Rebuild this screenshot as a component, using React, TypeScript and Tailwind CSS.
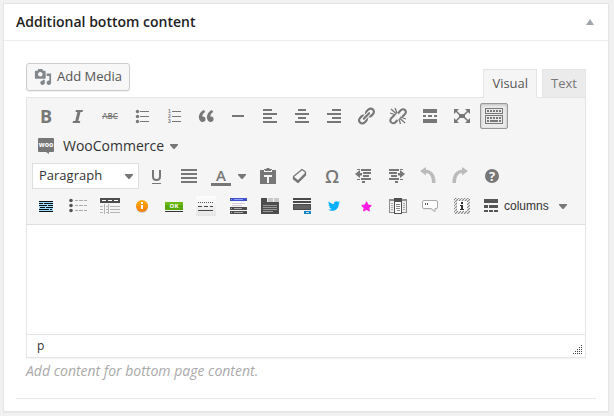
import type { ReactNode } from "react";
import { FaStar, FaTwitter } from "react-icons/fa";

const GRAY = "#777777";

function Icon({ children, crisp = false, size = 20 }: { children: ReactNode; crisp?: boolean; size?: number }) {
  return (
    <svg
      width={size}
      height={size}
      viewBox="0 0 20 20"
      fill={GRAY}
      shapeRendering={crisp ? "crispEdges" : "auto"}
      aria-hidden="true"
      className="block shrink-0"
    >
      {children}
    </svg>
  );
}

function Arrow() {
  return (
    <svg width="8" height="5" viewBox="0 0 8 5" fill="#777777" aria-hidden="true" className="block shrink-0">
      <path d="M0 0h8v1L4.500 5h-1L0 1z" />
    </svg>
  );
}

type Tool = { label: string; icon: ReactNode; active?: boolean };

function ToolButton({ label, icon, active }: Tool) {
  return (
    <button
      type="button"
      aria-label={label}
      aria-pressed={active}
      className={
        active
          ? "mx-0.5 flex h-[26px] w-7 items-center justify-center rounded-xs border border-[#999] bg-[#ebebeb] shadow-[inset_0_1px_3px_rgba(0,0,0,0.2)]"
          : "mx-0.5 flex h-[26px] w-7 items-center justify-center"
      }
    >
      {icon}
    </button>
  );
}

function Row({ label, children }: { label: string; children: ReactNode }) {
  return (
    <div role="group" aria-label={label} className="flex h-[30px] items-center">
      {children}
    </div>
  );
}

const LINK =
  "M17.74 2.76c1.68 1.69 1.68 4.41 0 6.1l-1.53 1.52c-1.12 1.12-2.7 1.47-4.14 1.09l2.62-2.61.76-.77.76-.76c.84-.84.84-2.2 0-3.04-.84-.85-2.2-.85-3.04 0l-.77.76-3.38 3.38c-.37-1.44-.02-3.02 1.1-4.14l1.52-1.53c1.69-1.68 4.42-1.68 6.1 0zM8.59 13.43l5.34-5.34c.42-.42.42-1.1 0-1.52-.44-.43-1.13-.39-1.53 0l-5.33 5.34c-.42.42-.42 1.1 0 1.52.44.43 1.13.39 1.52 0zm-.76 2.29l4.14-4.15c.38 1.44.03 3.02-1.09 4.14l-1.52 1.53c-1.69 1.68-4.41 1.68-6.1 0-1.68-1.68-1.68-4.42 0-6.1l1.53-1.52c1.12-1.12 2.7-1.47 4.14-1.1l-4.14 4.15c-.85.84-.85 2.2 0 3.05.84.84 2.2.84 3.04 0z";

const formatTools: Tool[] = [
  { label: "Bold", icon: <span className="text-lg leading-5 font-bold text-[#777]">B</span> },
  {
    label: "Italic",
    icon: (
      <Icon>
        <path d="M8 4h7l-.5 2h-2l-2.200 9h2l-.5 2H4.500l.5-2h2.200L9.400 6H7.500z" />
      </Icon>
    ),
  },
  {
    label: "Strikethrough",
    icon: (
      <Icon>
        <text x="10" y="13" textAnchor="middle" fontSize="8" fontWeight="600">ABC</text>
        <path d="M2 10h16v1H2z" shapeRendering="crispEdges" />
      </Icon>
    ),
  },
  {
    label: "Bulleted list",
    icon: (
      <Icon>
        <circle cx="5.500" cy="5.500" r="1.700" />
        <circle cx="5.500" cy="10.500" r="1.700" />
        <circle cx="5.500" cy="15.500" r="1.700" />
        <path d="M8 5h9v1H8zM8 10h9v1H8zM8 15h9v1H8z" shapeRendering="crispEdges" />
      </Icon>
    ),
  },
  {
    label: "Numbered list",
    icon: (
      <Icon>
        <path d="M8 5h9v1H8zM8 10h9v1H8zM8 15h9v1H8z" shapeRendering="crispEdges" />
        <g fontSize="5" fontWeight="700" fontFamily="Liberation Sans, sans-serif">
          <text x="4" y="7">1</text>
          <text x="4" y="12">2</text>
          <text x="4" y="17">3</text>
        </g>
      </Icon>
    ),
  },
  {
    label: "Blockquote",
    icon: (
      <Icon>
        <path d="M9.490 13.220c0-.74-.2-1.380-.61-1.900-.62-.78-1.830-.88-2.530-.72-.29-1.650 1.110-3.750 2.920-4.650L7.880 4c-2.730 1.300-5.420 4.280-4.960 8.050C3.210 14.430 4.590 16 6.540 16c.85 0 1.560-.25 2.120-.75s.83-1.180.83-2.030zm8.050 0c0-.74-.2-1.380-.61-1.900-.63-.78-1.830-.88-2.530-.72-.29-1.650 1.110-3.750 2.920-4.650L15.930 4c-2.730 1.300-5.410 4.280-4.950 8.050.29 2.380 1.660 3.950 3.610 3.950.85 0 1.560-.25 2.120-.75s.83-1.180.83-2.030z" />
      </Icon>
    ),
  },
  { label: "Horizontal line", icon: <Icon crisp><path d="M4 9h12v2H4z" /></Icon> },
  { label: "Align left", icon: <Icon crisp><path d="M3 3h9v2H3zM3 7h14v2H3zM3 11h9v2H3zM3 15h14v2H3z" /></Icon> },
  { label: "Align center", icon: <Icon crisp><path d="M6 3h8v2H6zM3 7h14v2H3zM6 11h8v2H6zM3 15h14v2H3z" /></Icon> },
  { label: "Align right", icon: <Icon crisp><path d="M8 3h9v2H8zM3 7h14v2H3zM8 11h9v2H8zM3 15h14v2H3z" /></Icon> },
  { label: "Insert link", icon: <Icon><path d={LINK} /></Icon> },
  {
    label: "Remove link",
    icon: (
      <Icon>
        <g fill="none" stroke={GRAY} strokeWidth="2">
          <path d="M10 7.500l2.500-3c1.500-1.800 3.500-1.600 4.500-.5s1.200 2.800-.2 4.200L14 11M6.500 9l-3 3c-1.500 1.500-1.300 3.300-.3 4.400s3 1.200 4.300-.2l2-2.200" />
        </g>
        <path d="M3 3l5.500 5M7 2l2 5M2 7l6 2M17 17l-5.500-5M12.500 18l-1.500-5M18 13l-6-2" fill="none" stroke={GRAY} strokeWidth="1.300" />
      </Icon>
    ),
  },
  {
    label: "Read more tag",
    icon: <Icon crisp><path d="M3 3h14v4H3zM3 9h3v2H3zM8 9h4v2H8zM14 9h3v2h-3zM3 13h14v4H3z" /></Icon>,
  },
  {
    label: "Distraction-free mode",
    icon: (
      <Icon>
        <path d="M7 8h6v4H7z" />
        <path d="M2 3h5L2 8zM18 3v5l-5-5zM2 17v-5l5 5zM18 17h-5l5-5z" />
        <path d="M3 4l5 5M17 4l-5 5M3 16l5-5M17 16l-5-5" stroke={GRAY} strokeWidth="1.500" />
      </Icon>
    ),
  },
  {
    label: "Toolbar toggle",
    active: true,
    icon: (
      <Icon crisp>
        <path fillRule="evenodd" d="M1 2h18v6H1zM2 3v4h16V3zM1 9h18v9H1zM2 10v7h16v-7z" />
        <path d="M3 4h2v2H3zM6 4h2v2H6zM9 4h2v2H9zM12 4h2v2h-2zM15 4h2v2h-2zM3 11h2v2H3zM6 11h2v2H6zM9 11h2v2H9zM12 11h2v2h-2zM15 11h2v2h-2zM3 14h2v2H3zM6 14h8v2H6zM15 14h2v2h-2z" />
      </Icon>
    ),
  },
];

const insertTools: Tool[] = [
  {
    label: "Paste as text",
    icon: (
      <Icon>
        <path d="M2 4h4V3h2l1-1h2l1 1h2v1h4v14H2z" />
        <path d="M6 4h8v2H6z" fill="#f5f5f5" />
        <path d="M7 4h6v1H7z" />
        <path d="M6 9h8v2h-3v6H9v-6H6z" fill="#f5f5f5" />
      </Icon>
    ),
  },
  {
    label: "Clear formatting",
    icon: (
      <Icon>
        <path d="M12 3.500l3.500 2.500v3L8 16.500 3.500 13v-2.500z" fill="#f5f5f5" stroke={GRAY} strokeWidth="1.300" strokeLinejoin="round" />
        <path d="M3.500 10.500L8 14l7.500-7.500V9L8 16.500 3.500 13z" />
      </Icon>
    ),
  },
  { label: "Special character", icon: <span className="text-lg leading-5 font-semibold text-[#777]">Ω</span> },
  {
    label: "Decrease indent",
    icon: (
      <Icon>
        <path d="M1 8l5-4v3h2v2.500H6V12z" />
        <path d="M3 3h3v1H3zM7 3h10v2H7zM9 6h8v2H9zM9 9h6v2H9zM7 12h10v2H7zM3 13h3v1H3zM8 15h3v2H8z" shapeRendering="crispEdges" />
      </Icon>
    ),
  },
  {
    label: "Increase indent",
    icon: (
      <Icon>
        <path d="M19 8l-5-4v3h-2v2.500h2V12z" />
        <path d="M14 3h3v1h-3zM3 3h10v2H3zM3 6h8v2H3zM5 9h6v2H5zM3 12h10v2H3zM14 13h3v1h-3zM9 15h3v2H9z" shapeRendering="crispEdges" />
      </Icon>
    ),
  },
  { label: "Undo", icon: <Icon><path d="M8 1L2 5l6 4.500V7c3.800.2 6 3.600 6 10h3.500C18 9 14 4 8 3.700z" fill="#bbbbbb" /></Icon> },
  { label: "Redo", icon: <Icon><path d="M12 1l6 4-6 4.500V7c-3.800.2-6 3.600-6 10H2.500C2 9 6 4 12 3.700z" fill="#bbbbbb" /></Icon> },
  {
    label: "Keyboard shortcuts",
    icon: (
      <Icon>
        <circle cx="10" cy="10" r="7" />
        <text x="10" y="15" textAnchor="middle" fontSize="13" fontWeight="700" fill="#f5f5f5">?</text>
      </Icon>
    ),
  },
];

const shortcodeTools: Tool[] = [
  {
    label: "Highlight",
    icon: (
      <Icon crisp>
        <path d="M3 5h14v11H3z" fill="#9bdcff" />
        <path d="M3 5h14v1H3zM3 7h4v1H3zM8 7h9v1H8zM3 9h8v1H3zM12 9h5v1h-5zM4 11h5v1H4zM10 11h7v1h-7zM3 13h10v1H3zM14 13h2v1h-2zM3 15h14v1H3z" fill="#111" />
      </Icon>
    ),
  },
  {
    label: "Styled list",
    icon: (
      <Icon>
        <g fill="#555">
          <circle cx="3" cy="4.500" r="1.800" />
          <circle cx="3" cy="9.500" r="1.800" />
          <circle cx="3" cy="14.500" r="1.800" />
        </g>
        <path d="M7 4h3v1H7zM11 4h4v1h-4zM16 4h3v1h-3zM7 9h3v1H7zM11 9h4v1h-4zM16 9h3v1h-3zM7 14h3v1H7zM11 14h4v1h-4zM16 14h3v1h-3z" fill="#aaa" shapeRendering="crispEdges" />
      </Icon>
    ),
  },
  {
    label: "Table",
    icon: (
      <Icon crisp>
        <path d="M0 2h20v5H0z" fill="#4d4d4d" />
        <path d="M2 4h4v1H2zM8 4h4v1H8zM14 4h4v1h-4z" fill="#fff" />
        <path d="M0 10h3v1H0zM6 10h2v1H6zM10 10h10v1H10zM0 13h3v1H0zM6 13h2v1H6zM10 13h10v1H10zM0 16h3v1H0zM6 16h2v1H6zM10 16h10v1H10zM4 8h1v10H4zM8 8h1v10H8z" fill="#b5b5b5" />
      </Icon>
    ),
  },
  {
    label: "Info icon",
    icon: (
      <Icon>
        <defs>
          <linearGradient id="orange" x1="0" y1="0" x2="0" y2="1">
            <stop offset="0" stopColor="#ffad0f" />
            <stop offset="1" stopColor="#f57c00" />
          </linearGradient>
        </defs>
        <circle cx="10" cy="11" r="6" fill="#cfcfcf" />
        <circle cx="10" cy="10" r="6" fill="url(#orange)" />
        <path d="M9 6h2v2H9zM9 9h2v4H9z" fill="#fff" shapeRendering="crispEdges" />
      </Icon>
    ),
  },
  {
    label: "Button",
    icon: (
      <Icon crisp>
        <path d="M1 6h18v8H1z" fill="#58a80c" />
        <path d="M1 6h18v3H1z" fill="#6cba14" />
        <path d="M1 15h18v1H1z" fill="#333" />
        <text x="10" y="12" textAnchor="middle" fontSize="6" fontWeight="700" fill="#fff">OK</text>
      </Icon>
    ),
  },
  {
    label: "Divider",
    icon: (
      <Icon crisp>
        <defs>
          <linearGradient id="sheet" x1="0" y1="0" x2="0" y2="1">
            <stop offset="0" stopColor="#fdfdfd" />
            <stop offset="1" stopColor="#e5e5e5" />
          </linearGradient>
        </defs>
        <path d="M0 0h20v20H0z" fill="url(#sheet)" />
        <path d="M2 6.500h15" stroke="#555" strokeDasharray="1 1" />
        <path d="M2 10h4v1H2zM8 10h4v1H8zM14 10h3v1h-3zM2 14h15v1H2z" fill="#444" />
      </Icon>
    ),
  },
  {
    label: "Accordion",
    icon: (
      <Icon crisp>
        <path d="M2 2h17v3H2z" fill="#3f51cf" />
        <path d="M3 3h1v1H3zM6 3h9v1H6z" fill="#8f9bf0" />
        <path d="M2 6h17v4H2z" fill="#fff" />
        <path d="M4 7h13v1H4zM4 9h10v1H4z" fill="#d8c8dc" />
        <path d="M2 11h17v3H2zM2 15h17v3H2z" fill="#4d4d4d" />
        <path d="M3 12h1v1H3zM6 12h8v1H6zM3 16h1v1H3zM6 16h9v1H6z" fill="#aaa" />
      </Icon>
    ),
  },
  {
    label: "Tabs",
    icon: (
      <Icon crisp>
        <path d="M1 2h6v4h12v12H1z" fill="#4d4d4d" />
        <path d="M8 2h5v4H8zM14 2h5v4h-5z" fill="#c9c9c9" />
        <path d="M3 9h14v1H3zM3 11h14v1H3zM3 13h14v1H3zM3 15h10v1H3z" fill="#999" />
      </Icon>
    ),
  },
  {
    label: "Call to action",
    icon: (
      <Icon crisp>
        <path d="M1 2h18v2H1zM1 5h18v2H1zM1 8h18v6H1z" fill="#4a4a4a" />
        <path d="M2 9h16v4H2z" fill="#626262" />
        <path d="M12 15h7v3h-7z" fill="#1683c4" />
        <path d="M14 16h3v1h-3z" fill="#bfe2f7" />
      </Icon>
    ),
  },
  { label: "Twitter", icon: <FaTwitter size={12} color="#00b0ff" /> },
  { label: "Icon", icon: <FaStar size={11} color="#fb1ee0" /> },
  {
    label: "Carousel",
    icon: (
      <Icon crisp>
        <path d="M1 3h18v14H1z" fill="#8c8c8c" />
        <path d="M2 5h16v11H2z" fill="#eee" />
        <path d="M3 7h2v1H3zM3 9h2v1H3zM3 11h2v1H3zM3 13h2v1H3zM15 7h2v1h-2zM15 9h2v1h-2zM15 11h2v1h-2zM15 13h2v1h-2z" fill="#aaa" />
        <path d="M6 2h8v16H6z" fill="#505050" />
        <path d="M7 6h6v11H7z" fill="#fff" />
        <path d="M8 8h4v1H8zM8 10h4v1H8zM8 12h4v1H8zM9 14h3v1H9z" fill="#888" />
      </Icon>
    ),
  },
  {
    label: "Testimonial",
    icon: (
      <Icon>
        <path d="M4 5.500h12q1.500 0 1.500 1.500v5q0 1.500-1.500 1.500h-1v3l-4-3H4q-1.500 0-1.500-1.500V7q0-1.500 1.500-1.500z" fill="#d8d8d8" />
        <path d="M4 4.500h12q1.500 0 1.500 1.500v5q0 1.500-1.500 1.500h-1v3l-4-3H4q-1.500 0-1.500-1.500V6q0-1.500 1.500-1.500z" fill="#fff" stroke="#aaa" />
        <path d="M5 7h1v2H5zM7 7h1v2H7z" fill="#555" shapeRendering="crispEdges" />
      </Icon>
    ),
  },
  {
    label: "Info box",
    icon: (
      <Icon>
        <defs>
          <pattern id="hatch" width="3" height="3" patternUnits="userSpaceOnUse">
            <path d="M0 0h3v3H0z" fill="#f3f3f3" />
            <path d="M0 3L3 0" stroke="#888" strokeWidth="1.200" />
          </pattern>
        </defs>
        <path d="M2 2h16v16H2z" fill="url(#hatch)" />
        <path d="M5 5h10v10H5z" fill="#fff" />
        <path d="M9 6h2v2H9zM8 9h3v4h1v1H8v-1h1v-3H8z" fill="#333" shapeRendering="crispEdges" />
      </Icon>
    ),
  },
];

export default function App() {
  return (
    <main className="min-h-screen bg-[#f1f1f1] pt-[3px] pr-[5px] pb-1 pl-[3px] font-['Open_Sans',sans-serif] text-[#444]">
      <section className="border border-[#e5e5e5] bg-white shadow-[0_1px_1px_rgba(0,0,0,0.04)]">
        <header className="flex h-[37px] items-center justify-between border-b border-[#eee] px-3">
          <h2 className="text-sm font-semibold text-[#222]">Additional bottom content</h2>
          <button type="button" aria-label="Collapse panel" className="px-0.5">
            <svg width="8" height="6" viewBox="0 0 8 6" fill="#a0a5aa" aria-hidden="true">
              <path d="M4 0l4 6H0z" />
            </svg>
          </button>
        </header>

        <div className="px-3 pb-3">
          <div className="border-b border-[#e8e8e8] px-2.5 pt-[22px] pb-[17px]">
            <div className="flex items-start justify-between">
              <button
                type="button"
                className="flex h-7 items-center gap-[5px] rounded-[3px] border border-[#ccc] bg-[#f7f7f7] px-[7px] text-[13px] text-[#555] shadow-[0_1px_0_rgba(0,0,0,0.06)]"
              >
                <svg width="18" height="18" viewBox="0 0 20 20" fill="#82878c" aria-hidden="true">
                  <path d="M13 11V4c0-.55-.45-1-1-1h-1.670L9 1H5L3.670 3H2c-.55 0-1 .45-1 1v7c0 .55.45 1 1 1h10c.55 0 1-.45 1-1zM7 4.500c1.380 0 2.500 1.120 2.500 2.500S8.380 9.500 7 9.500 4.500 8.380 4.500 7 5.620 4.500 7 4.500zM14 6h5v10.500c0 1.380-1.120 2.500-2.500 2.500S14 17.880 14 16.500s1.120-2.500 2.500-2.500c.17 0 .34.02.5.05V9h-3V6zm-4 8.050V13h2v3.500c0 1.380-1.120 2.500-2.500 2.500S7 17.880 7 16.500 8.120 14 9.500 14c.17 0 .34.02.5.05z" />
                </svg>
                Add Media
              </button>
              <div role="tablist" aria-label="Editor mode" className="flex gap-[5px] pt-1.5 text-[13px]">
                <button
                  type="button"
                  role="tab"
                  aria-selected="true"
                  className="relative z-10 -mb-px h-[29px] border border-b-0 border-[#e5e5e5] bg-[#f5f5f5] px-2 text-[#555]"
                >
                  Visual
                </button>
                <button
                  type="button"
                  role="tab"
                  aria-selected="false"
                  className="h-7 border border-b-0 border-[#e5e5e5] bg-[#ebebeb] px-2 text-[#777]"
                >
                  Text
                </button>
              </div>
            </div>

            <div className="border border-[#e5e5e5] bg-white shadow-[0_1px_1px_rgba(0,0,0,0.04)]">
              <div role="toolbar" aria-label="Editor tools" className="border-b border-[#dedede] bg-[#f5f5f5] p-[3px]">
                <Row label="Formatting">
                  {formatTools.map((tool) => (
                    <ToolButton key={tool.label} {...tool} />
                  ))}
                </Row>

                <Row label="Store">
                  <button type="button" className="flex items-center gap-1.5 pl-2 text-sm text-[#333]">
                    <span className="flex items-center gap-[9px]">
                      <svg width="16" height="16" viewBox="0 0 16 16" aria-hidden="true">
                        <path d="M1 0h14q1 0 1 1v12q0 1-1 1h-4v2l-3-2H1q-1 0-1-1V1q0-1 1-1z" fill={GRAY} />
                        <text x="8" y="9" textAnchor="middle" fontSize="7" fontWeight="700" fill="#fff">woo</text>
                      </svg>
                      WooCommerce
                    </span>
                    <Arrow />
                  </button>
                </Row>

                <Row label="Text style">
                  <div className="relative mx-0.5">
                    <select
                      aria-label="Text format"
                      className="block h-[26px] w-[107px] appearance-none border border-[#ddd] bg-white pl-1.5 text-[13px] text-[#333]"
                    >
                      <option>Paragraph</option>
                      <option>Heading 1</option>
                      <option>Heading 2</option>
                    </select>
                    <span className="pointer-events-none absolute inset-y-0 right-1.5 flex items-center">
                      <Arrow />
                    </span>
                  </div>
                  <ToolButton
                    label="Underline"
                    icon={
                      <Icon>
                        <path d="M6 4v6.500q0 3.500 3.500 3.500t3.500-3.500V4" fill="none" stroke={GRAY} strokeWidth="2" />
                        <path d="M5 17h9v1H5z" shapeRendering="crispEdges" />
                      </Icon>
                    }
                  />
                  <ToolButton
                    label="Justify"
                    icon={<Icon crisp><path d="M2 3h16v2H2zM2 7h16v2H2zM2 11h16v2H2zM2 15h16v2H2z" /></Icon>}
                  />
                  <button type="button" aria-label="Text color" className="flex h-[26px] w-[47px] items-center gap-[7px] pl-1.5">
                    <Icon>
                      <text x="10" y="15" textAnchor="middle" fontSize="15" fontWeight="600">A</text>
                      <path d="M0 17h20v3H0z" />
                    </Icon>
                    <Arrow />
                  </button>
                  {insertTools.map((tool) => (
                    <ToolButton key={tool.label} {...tool} />
                  ))}
                </Row>

                <Row label="Shortcodes">
                  {shortcodeTools.map((tool) => (
                    <ToolButton key={tool.label} {...tool} />
                  ))}
                  <button
                    type="button"
                    className="flex items-center gap-2.5 pl-[3px] font-['Liberation_Sans',sans-serif] text-xs text-[#333]"
                  >
                    <span className="flex items-center gap-[3px]">
                      <Icon crisp>
                        <path d="M3 3h14v4H3zM3 9h4v3H3zM8 9h9v3H8zM3 14h4v2H3zM8 14h4v2H8zM13 14h4v2h-4z" fill="#555" />
                      </Icon>
                      columns
                    </span>
                    <Arrow />
                  </button>
                </Row>
              </div>

              <textarea aria-label="Bottom content" className="block h-[109px] w-full resize-none bg-white p-2 text-sm outline-none" />

              <div className="flex h-[23px] items-center justify-between border-t border-[#e5e5e5] pr-0.5 pl-2.5 text-xs text-[#333]">
                <span>p</span>
                <svg width="10" height="10" viewBox="0 0 10 10" fill="#444" shapeRendering="crispEdges" aria-hidden="true" className="mb-0.5 self-end">
                  <path d="M8 0h1v1H8zM6 2h1v1H6zM8 2h1v1H8zM4 4h1v1H4zM6 4h1v1H6zM8 4h1v1H8zM2 6h1v1H2zM4 6h1v1H4zM6 6h1v1H6zM8 6h1v1H8zM0 8h1v1H0zM2 8h1v1H2zM4 8h1v1H4zM6 8h1v1H6zM8 8h1v1H8z" />
                </svg>
              </div>
            </div>
            <p className="pt-[3px] text-sm text-[#aaa] italic">Add content for bottom page content.</p>
          </div>
        </div>
      </section>
    </main>
  );
}
